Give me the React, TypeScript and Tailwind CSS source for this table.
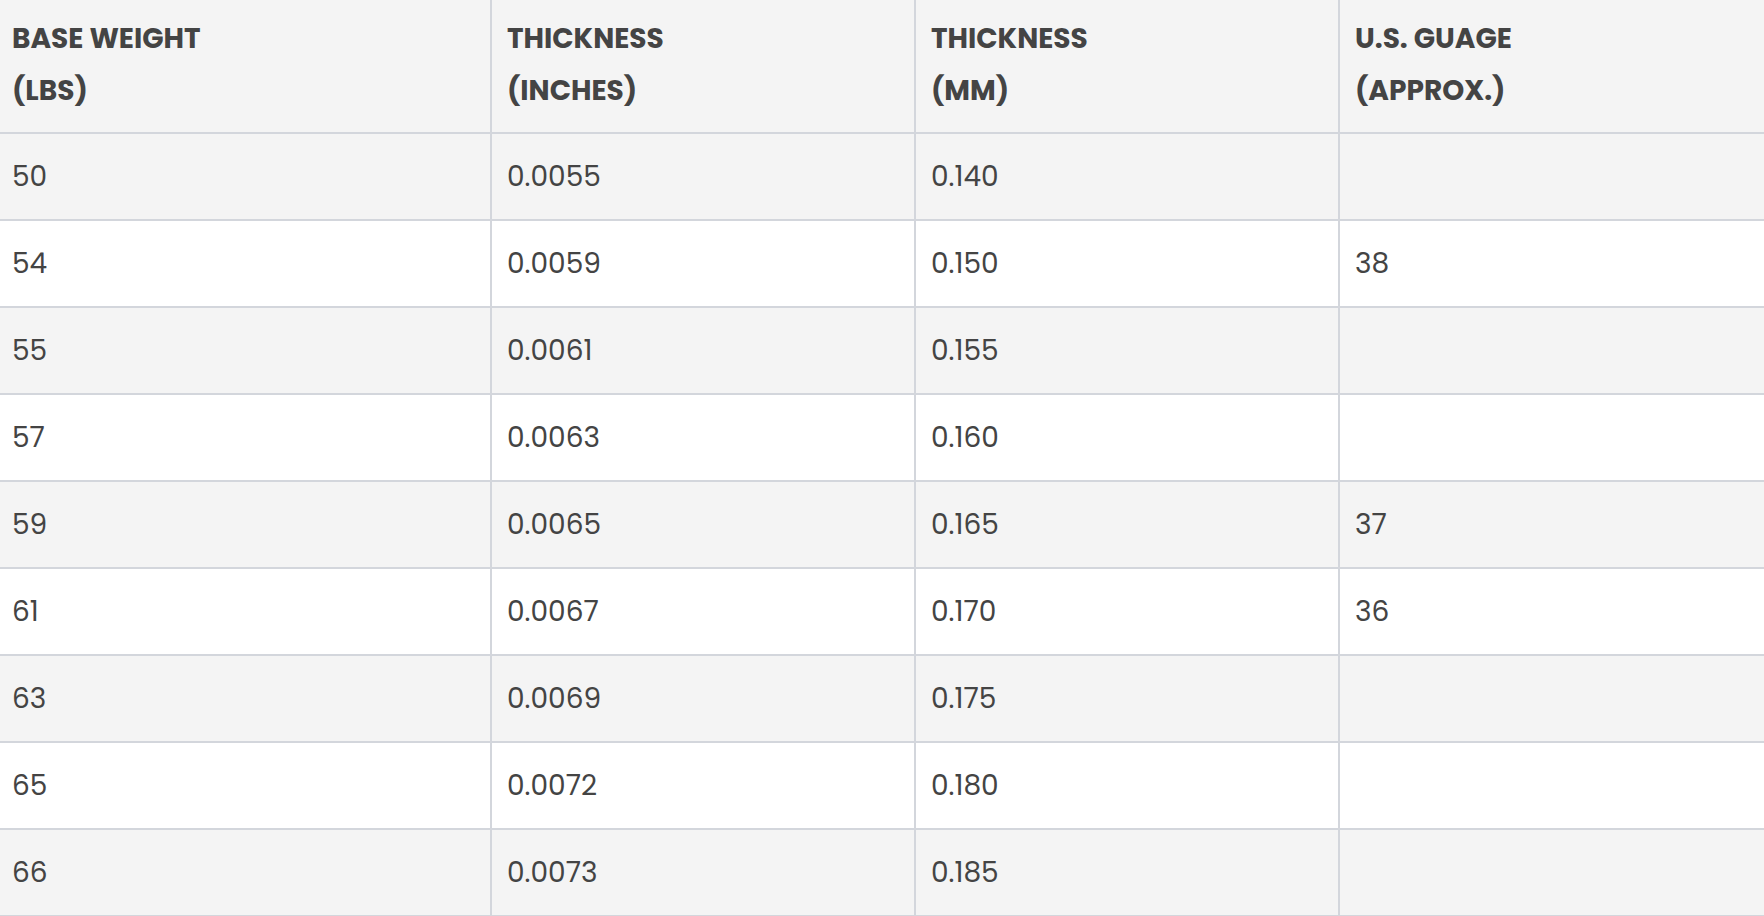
const headers: [string, string][] = [
  ["BASE WEIGHT", "(LBS)"],
  ["THICKNESS", "(INCHES)"],
  ["THICKNESS", "(MM)"],
  ["U.S. GUAGE", "(APPROX.)"],
];

const rows: string[][] = [
  ["50", "0.0055", "0.140", ""],
  ["54", "0.0059", "0.150", "38"],
  ["55", "0.0061", "0.155", ""],
  ["57", "0.0063", "0.160", ""],
  ["59", "0.0065", "0.165", "37"],
  ["61", "0.0067", "0.170", "36"],
  ["63", "0.0069", "0.175", ""],
  ["65", "0.0072", "0.180", ""],
  ["66", "0.0073", "0.185", ""],
];

const cellBase = "flex items-center border-b-2 border-[#d3d6dc] pr-4";

export default function App() {
  return (
    <div
      className="w-full min-h-screen bg-white text-[#444444] overflow-hidden"
      style={{ fontFamily: "Poppins, Inter, 'Noto Sans', sans-serif" }}
    >
      <div className="grid grid-cols-[492px_424px_424px_1fr]">
        {headers.map(([a, b], i) => (
          <div
            key={i}
            className={`${cellBase} h-[134px] pb-[2px] bg-[#f4f4f4] text-[28px] font-bold leading-[52px] ${
              i < 3 ? "border-r-2" : ""
            } ${i === 0 ? "pl-[12px]" : "pl-[15px]"}`}
          >
            <div>
              <div>{a}</div>
              <div>{b}</div>
            </div>
          </div>
        ))}
        {rows.map((row, r) =>
          row.map((v, c) => (
            <div
              key={`${r}-${c}`}
              className={`${cellBase} h-[87px] text-[28px] ${
                r % 2 === 0 ? "bg-[#f4f4f4]" : "bg-white"
              } ${c < 3 ? "border-r-2" : ""} ${c === 0 ? "pl-[12px]" : "pl-[15px]"}`}
            >
              {v}
            </div>
          ))
        )}
      </div>
    </div>
  );
}
